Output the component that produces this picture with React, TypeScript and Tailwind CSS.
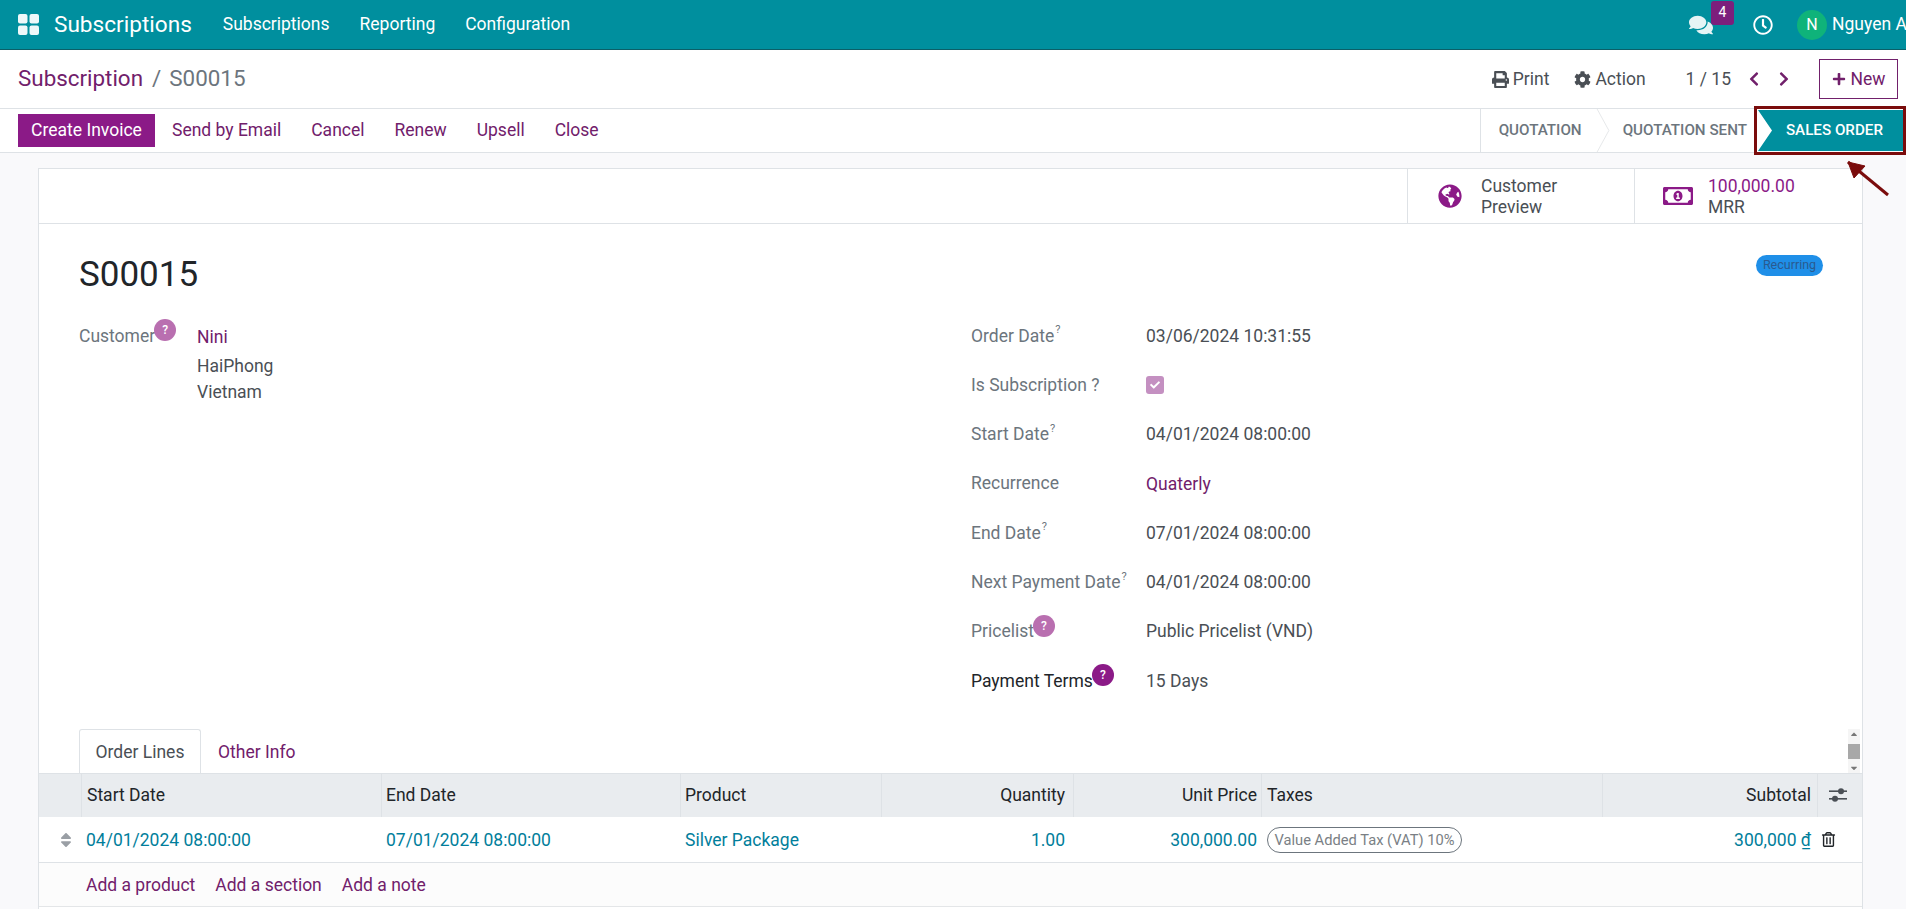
import type { ReactNode } from 'react';
import {
  FaPrint, FaCog, FaChevronLeft, FaChevronRight, FaPlus, FaComments, FaRegClock,
  FaGlobeAmericas, FaRegMoneyBillAlt, FaRegTrashAlt, FaCheck, FaCaretUp, FaCaretDown, FaSort,
} from 'react-icons/fa';

const PURPLE = 'text-[#71206b]';

const HelpBadge = ({ dark }: { dark?: boolean }) => (
  <span
    className={[
      '-ml-px mb-[11px] flex size-[22px] shrink-0 items-center justify-center rounded-full text-[12px] font-medium text-white',
      dark ? 'bg-[#8b1a87]' : 'bg-[#b96fb0]',
    ].join(' ')}
  >
    ?
  </span>
);

const Row = ({ label, children }: { label: ReactNode; children: ReactNode }) => (
  <div className="flex h-[49.3px] items-center">
    <div className="flex w-[175px] items-center text-[#6c757d]">{label}</div>
    <div className="text-[#4a4f55]">{children}</div>
  </div>
);

const Q = () => <sup className="ml-px text-[11px] text-[#6c757d]">?</sup>;

const headCell = 'flex items-center border-l border-[#dee2e6] px-[4px] pb-[2px] text-[#212529]';
const bodyLink = 'text-[#017e9b]';

export default function App() {
  return (
    <div className="relative flex h-[909px] w-[1906px] flex-col overflow-hidden bg-[#f9f9fb] text-[17.5px] font-['Roboto',sans-serif]">
      {/* top navbar */}
      <nav className="flex h-[50px] shrink-0 items-center border-b border-[#0b5f68] bg-[#008f9e] text-white">
        <svg className="ml-[18px] size-[21px]" viewBox="0 0 21 21" fill="#eef8f9">
          <rect x="0" y="0" width="9.5" height="9.5" rx="2" />
          <rect x="11.5" y="0" width="9.5" height="9.5" rx="2" />
          <rect x="0" y="11.5" width="9.5" height="9.5" rx="2" />
          <rect x="11.5" y="11.5" width="9.5" height="9.5" rx="2" />
        </svg>
        <span className="ml-[15px] text-[22.6px]">Subscriptions</span>
        <div className="ml-[31px] flex gap-[30px]">
          <span>Subscriptions</span>
          <span>Reporting</span>
          <span>Configuration</span>
        </div>
        <div className="ml-auto flex items-center whitespace-nowrap">
          <div className="relative mr-[40px]">
            <FaComments className="size-[24px] text-[#e6f4f5]" />
            <span className="absolute -top-[12px] left-[22px] flex h-[24px] w-[23px] items-center justify-center rounded-[3px] bg-[#7c1f7c] text-[14px]">
              4
            </span>
          </div>
          <FaRegClock className="size-[20px]" />
          <span className="ml-[24px] flex size-[30px] items-center justify-center rounded-full bg-[#0fb37a] text-[16px]">N</span>
          <span className="ml-[5px] w-[74px] text-[17.5px]">Nguyen A</span>
        </div>
      </nav>

      {/* breadcrumb + actions */}
      <div className="flex h-[59px] shrink-0 items-center border-b border-[#dee2e6] bg-white">
        <span className={`ml-[18px] text-[22.4px] ${PURPLE}`}>Subscription</span>
        <span className="ml-[9px] text-[22.4px] text-[#6c757d]">/</span>
        <span className="ml-[8px] text-[22.4px] text-[#6c757d]">S00015</span>
        <div className="ml-auto flex items-center text-[#4a4f55]">
          <FaPrint className="size-[17px]" />
          <span className="ml-[4px]">Print</span>
          <FaCog className="ml-[25px] size-[17px]" />
          <span className="ml-[4px]">Action</span>
          <span className="ml-[40px]">1 / 15</span>
          <FaChevronLeft className={`ml-[15px] size-[16px] ${PURPLE}`} />
          <FaChevronRight className={`ml-[14px] size-[16px] ${PURPLE}`} />
          <button className={`ml-[27px] mr-[8px] flex h-[40px] w-[79px] items-center justify-center gap-[5px] border border-[#71206b] ${PURPLE}`}>
            <FaPlus className="size-[14px]" />
            New
          </button>
        </div>
      </div>

      {/* statusbar row */}
      <div className="flex h-[44px] shrink-0 items-center border-b border-[#dee2e6] bg-white">
        <button className="ml-[18px] flex h-[33px] w-[137px] items-center justify-center bg-[#8b1a87] text-white">Create Invoice</button>
        <div className={`ml-[17px] flex gap-[30px] ${PURPLE}`}>
          <span>Send by Email</span>
          <span>Cancel</span>
          <span>Renew</span>
          <span>Upsell</span>
          <span>Close</span>
        </div>
        <div className="ml-auto flex h-full items-center border-l border-[#dee2e6] text-[15.2px] font-medium text-[#6c757d]">
          <span className="ml-[18px]">QUOTATION</span>
          <svg className="ml-[14px] h-full w-[14px]" viewBox="0 0 14 44" fill="none" stroke="#e5e7ea">
            <path d="M1 0 L13 22 L1 44" />
          </svg>
          <span className="ml-[13px]">QUOTATION SENT</span>
          <span className="ml-[11px] mr-[3px] flex h-[41px] w-[145px] items-center justify-end bg-[#008f9e] pr-[20px] text-white [clip-path:polygon(0_0,100%_0,100%_100%,0_100%,14px_50%)]">
            SALES ORDER
          </span>
        </div>
      </div>

      {/* sheet */}
      <div className="ml-[38px] mt-[15px] flex w-[1825px] flex-1 flex-col border-x border-t border-[#dee2e6] bg-white">
        <div className="flex h-[55px] shrink-0 justify-end border-b border-[#dee2e6]">
          <div className="flex w-[227px] items-center border-l border-[#dee2e6] pl-[30px] leading-[21px] text-[#4a4f55]">
            <FaGlobeAmericas className="size-[24px] text-[#8b1a87]" />
            <span className="ml-[19px] pt-px">Customer<br />Preview</span>
          </div>
          <div className="flex w-[228px] items-center border-l border-[#dee2e6] pl-[28px] leading-[21px] text-[#4a4f55]">
            <FaRegMoneyBillAlt className="size-[30px] text-[#8b1a87]" />
            <span className="ml-[15px] pt-px"><span className="text-[#8b1a87]">100,000.00</span><br />MRR</span>
          </div>
        </div>

        <div className="relative px-[40px]">
          <span className="absolute right-[39px] top-[31px] flex h-[21px] w-[67px] items-center justify-center rounded-full bg-[#1f8fe8] text-[12.5px] text-[#2a5a8f]">
            Recurring
          </span>
          <h1 className="mt-[26px] text-[35px] leading-[50px] text-[#212529]">S00015</h1>
          <div className="mt-[11px] flex">
            <div className="flex w-[892px]">
              <div className="flex h-[49.3px] w-[118px] items-center text-[#6c757d]">
                Customer
                <HelpBadge />
              </div>
              <div className="mt-[13px] leading-[26px] text-[#4a4f55]">
                <div className={PURPLE}>Nini</div>
                <div className="mt-[3px]">HaiPhong</div>
                <div>Vietnam</div>
              </div>
            </div>
            <div className="flex flex-col">
              <Row label={<>Order Date<Q /></>}>03/06/2024 10:31:55</Row>
              <Row label="Is Subscription ?">
                <span className="flex size-[18px] items-center justify-center rounded-[3px] bg-[#c490c1]">
                  <FaCheck className="size-[10px] text-white" />
                </span>
              </Row>
              <Row label={<>Start Date<Q /></>}>04/01/2024 08:00:00</Row>
              <Row label="Recurrence"><span className={`block pt-[2px] ${PURPLE}`}>Quaterly</span></Row>
              <Row label={<>End Date<Q /></>}>07/01/2024 08:00:00</Row>
              <Row label={<>Next Payment Date<Q /></>}>04/01/2024 08:00:00</Row>
              <Row label={<>Pricelist<HelpBadge /></>}>Public Pricelist (VND)</Row>
              <Row label={<><span className="text-[#212529]">Payment Terms</span><HelpBadge dark /></>}>15 Days</Row>
            </div>
          </div>
        </div>

        {/* tabs */}
        <div className="mt-[24px] flex h-[44px] shrink-0 items-stretch pl-[40px]">
          <span className="flex w-[122px] items-center justify-center rounded-t-[3px] border-x border-t border-[#dee2e6] pt-px text-[#4a4f55]">Order Lines</span>
          <span className={`ml-[17px] flex items-center pt-px ${PURPLE}`}>Other Info</span>
          <div className="ml-auto mr-[2px] flex w-[12px] flex-col items-center justify-between bg-[#f5f5f5] text-[#777]">
            <FaCaretUp className="size-[10px]" />
            <span className="h-[15px] w-full bg-[#a8a8a8]" />
            <FaCaretDown className="size-[10px]" />
          </div>
        </div>

        {/* order lines */}
        <div className="grid h-[44px] shrink-0 grid-cols-[42px_300px_299px_201px_192px_188px_341px_215px_45px] border-t border-[#dee2e6] bg-[#e9ecef]">
          <div />
          <div className={`${headCell} pl-[5px]`}>Start Date</div>
          <div className={headCell}>End Date</div>
          <div className={headCell}>Product</div>
          <div className={`${headCell} justify-end pr-[8px]`}>Quantity</div>
          <div className={`${headCell} justify-end`}>Unit Price</div>
          <div className={`${headCell} pl-[5px]`}>Taxes</div>
          <div className={`${headCell} justify-end pr-[6px]`}>Subtotal</div>
          <div className={`${headCell} justify-center pr-[8px]`}>
            <svg className="h-[14px] w-[18px] text-[#4a4f55]" viewBox="0 0 18 14" fill="currentColor">
              <rect x="0" y="2.4" width="18" height="1.6" />
              <circle cx="12" cy="3.2" r="3" />
              <rect x="0" y="10" width="18" height="1.6" />
              <circle cx="6" cy="10.8" r="3" />
            </svg>
          </div>
        </div>
        <div className="grid h-[46px] shrink-0 grid-cols-[42px_300px_299px_201px_192px_188px_341px_215px_45px] border-b border-[#dee2e6]">
          <div className="flex items-center justify-end pr-[6px] text-[#9a9fa5]">
            <FaSort className="size-[18px]" />
          </div>
          <div className={`flex items-center pl-[5px] ${bodyLink}`}>04/01/2024 08:00:00</div>
          <div className={`flex items-center pl-[5px] ${bodyLink}`}>07/01/2024 08:00:00</div>
          <div className={`flex items-center pl-[5px] ${bodyLink}`}>Silver Package</div>
          <div className={`flex items-center justify-end pr-[8px] ${bodyLink}`}>1.00</div>
          <div className={`flex items-center justify-end pr-[4px] ${bodyLink}`}>300,000.00</div>
          <div className="flex items-center pl-[6px]">
            <span className="flex h-[26px] w-[195px] items-center justify-center rounded-full border border-[#6c757d] text-[14.7px] text-[#7a7f85]">Value Added Tax (VAT) 10%</span>
          </div>
          <div className={`flex items-center justify-end pr-[6px] ${bodyLink}`}>300,000 ₫</div>
          <div className="flex items-center pl-[4px]"><FaRegTrashAlt className="size-[15px] text-[#212529]" /></div>
        </div>
        <div className={`flex h-[44px] shrink-0 items-center gap-[20px] border-b border-[#e4e6e8] bg-[#fcfcfc] pl-[47px] ${PURPLE}`}>
          <span>Add a product</span>
          <span>Add a section</span>
          <span>Add a note</span>
        </div>
      </div>

      {/* annotation drawn over the status bar */}
      <div className="absolute left-[1754px] top-[106px] h-[49px] w-[152px] border-[3px] border-[#7a0c0c]" />
      <svg className="absolute left-[1841px] top-[156px] h-[45px] w-[55px]" viewBox="0 0 55 45" fill="#7a0c0c" stroke="#7a0c0c">
        <path d="M7 6 L47 39" strokeWidth="3" />
        <path d="M7 6 L24 10 L13 22 Z" />
      </svg>
    </div>
  );
}
